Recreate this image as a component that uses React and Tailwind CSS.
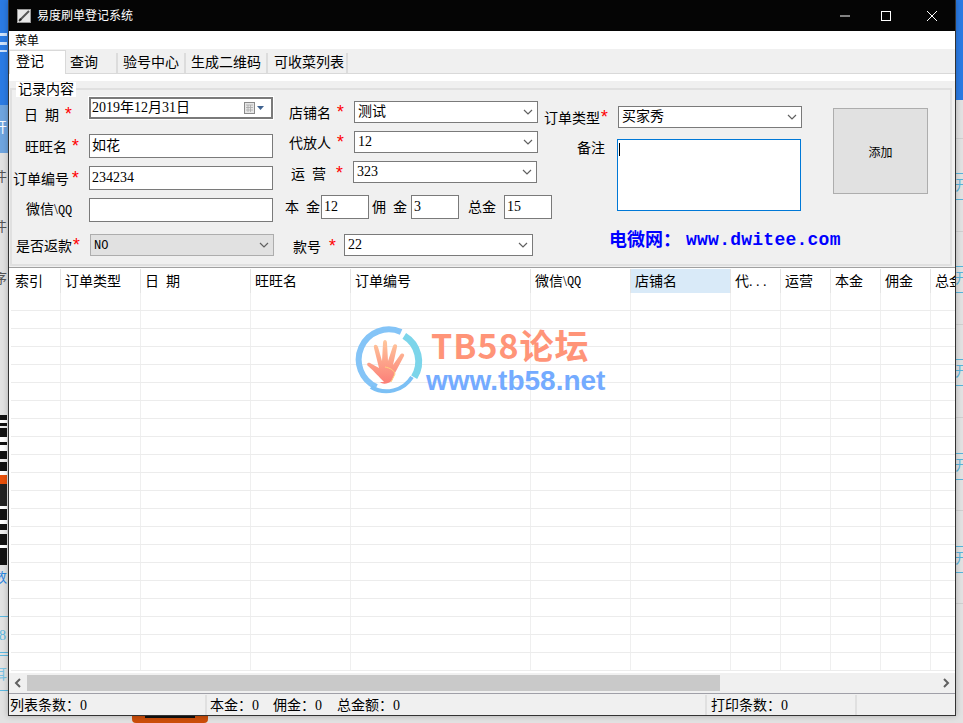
const FONT = '"Liberation Serif","Noto Sans CJK SC",serif';

function Star({ cls = "ml-[6px]" }) {
  return <span className={`${cls} inline-flex w-[7px] h-[7px] justify-center items-start text-[#ff0000] text-[18px] leading-[14px] font-['Liberation_Mono']`}>*</span>;
}

function Chevron() {
  return (
    <svg width="10" height="6" viewBox="0 0 10 6" className="shrink-0">
      <path d="M1 1l4 4 4-4" fill="none" stroke="#606060" strokeWidth="1.2" />
    </svg>
  );
}

function Box({ w, h = "h-6", children, cls = "" }) {
  return (
    <div className={`${w} ${h} shrink-0 bg-white border-[#7a7a7a] [border-width:1.5px] flex items-center pl-[2px] overflow-hidden leading-none ${cls}`}>
      {children}
    </div>
  );
}

function Select({ w, children, disabled }) {
  return (
    <div className={`${w} h-[22px] shrink-0 flex items-center justify-between pl-[3px] pr-[4px] border-[1.5px] leading-none ${disabled ? "bg-[#e1e1e1] border-[#adadad]" : "bg-white border-[#7a7a7a]"}`}>
      <span className={disabled ? "text-[12px]" : ""}>{children}</span>
      <Chevron />
    </div>
  );
}

const headers = [
  ["索引", "w-[50px]"], ["订单类型", "w-[80px]"], ["日\u2002期", "w-[110px]"], ["旺旺名", "w-[100px]"],
  ["订单编号", "w-[180px]"], ["微信\\QQ", "w-[100px]"], ["店铺名", "w-[100px]"], ["代...", "w-[50px]"],
  ["运营", "w-[50px]"], ["本金", "w-[50px]"], ["佣金", "w-[50px]"], ["总金", "w-[50px]"],
];

function Hand() {
  return (
    <svg width="72" height="72" viewBox="0 0 72 72" className="shrink-0">
      <defs>
        <linearGradient id="hg" x1="0" y1="0" x2="0" y2="1">
          <stop offset="0" stopColor="#ffc79c" />
          <stop offset="1" stopColor="#fb7f78" />
        </linearGradient>
      </defs>
      <path d="M20 60A30 30 0 0 1 52 9" transform="rotate(-8 36 36)" fill="none" stroke="#84c4f7" strokeWidth="6" />
      <path d="M53 12A30 30 0 0 1 60 54" transform="rotate(-4 36 36)" fill="none" stroke="#7cd5ea" strokeWidth="7" />
      <path d="M18 62A30 30 0 0 0 59 52" fill="none" stroke="#7cc0f5" strokeWidth="4" />
      <path d="M31 57C26 52 22 47 15 41c-2-2 0-4 2-3l9 5-5-20c-1-4 3-4 4-1l4 14 1-18c0-4 4-4 4 0l1 18 5-15c1-3 5-2 4 1l-4 18 7-10c2-3 5-1 4 1l-9 17c-2 6-3 9-7 10-3 1-6 1-8-1z" fill="url(#hg)" />
      <path d="M32 42c5 1 9 3 10 7l-4 8" fill="none" stroke="#ffd27e" strokeWidth="1" />
    </svg>
  );
}

export default function App() {
  return (
    <div className="relative w-[963px] h-[723px] overflow-hidden bg-[#e2e2e2] text-[14px] text-black" style={{ fontFamily: FONT }}>
      {/* desktop behind the window */}
      <div className="absolute left-0 top-0 w-[8px] h-[105px] bg-[#2b7be4]" />
      <div className="absolute left-0 top-[33px] w-[7px] h-[3px] bg-[#cfe2fa]" />
      <div className="absolute left-0 top-[42px] w-[7px] h-[3px] bg-[#cfe2fa]" />
      <div className="absolute left-0 top-[50px] w-[7px] h-[2px] bg-[#cfe2fa]" />
      <div className="absolute left-0 top-[105px] w-[8px] h-[48px] bg-[#6fa5df] text-white overflow-hidden leading-none pt-4 text-[14px]"><span className="-ml-[7px] block">开</span></div>
      <div className="absolute left-0 top-[170px] w-[8px] text-[#555] overflow-hidden leading-none"><span className="-ml-[7px] block">件</span></div>
      <div className="absolute left-0 top-[220px] w-[8px] text-[#555] overflow-hidden leading-none"><span className="-ml-[7px] block">件</span></div>
      <div className="absolute left-0 top-[272px] w-[8px] text-[#555] overflow-hidden leading-none"><span className="-ml-[7px] block">序</span></div>
      <div className="absolute left-0 top-[415px] w-[7px] h-[60px] bg-[linear-gradient(180deg,#111_0_5px,#fff_5px_8px,#111_8px_11px,#eee_11px_13px,#111_13px_22px,#fff_22px_27px,#111_27px_30px,#fff_30px_36px,#111_36px_44px,#eee_44px_47px,#111_47px_56px,#fff_56px_60px)]" />
      <div className="absolute left-0 top-[475px] w-[7px] h-[9px] bg-[#e8500a]" />
      <div className="absolute left-0 top-[484px] w-[7px] h-[81px] bg-[linear-gradient(180deg,#222_0_22px,#fff_22px_25px,#111_25px_36px,#fff_36px_40px,#111_40px_46px,#eee_46px_50px,#111_50px_61px,#fff_61px_64px,#111_64px_81px)]" />
      <div className="absolute left-0 top-[571px] w-[8px] text-[#2b86e0] overflow-hidden leading-none"><span className="-ml-[7px] block">数</span></div>
      <div className="absolute left-0 top-[616px] w-[8px] h-[37px] border-y border-[#5cb8e0] text-[#5cb8e0] overflow-hidden leading-none pt-3"><span className="-ml-[1px] block">8</span></div>
      <div className="absolute left-0 top-[655px] w-[8px] h-[36px] border-y border-[#5cb8e0] text-[#7cc4e4] overflow-hidden leading-none pt-3"><span className="-ml-[7px] block">耳</span></div>
      <div className="absolute left-[132px] top-[715px] w-[76px] h-[8px] bg-[#cc4e0a] rounded-b-sm" />
      <div className="absolute left-[145px] top-[716px] w-[50px] h-[2px] bg-[#111]" />
      <div className="absolute left-[956px] top-0 w-[7px] h-[100px] bg-[#2b7be4]" />
      {[138, 231, 324, 417, 510, 603].map((y) => (
        <div key={y} className="absolute left-[956px] w-[7px] h-px bg-[#cfcfcf]" style={{ top: y }} />
      ))}
      {[173, 266, 359, 453, 546].map((y) => (
        <div key={y} className="absolute left-[956px] w-[7px] h-[27px] border-y border-[#58b4dc] text-[#58b4dc] overflow-hidden leading-none pt-[5px]" style={{ top: y }}>
          <span className="block -ml-[1px]">开</span>
        </div>
      ))}

      {/* the window */}
      <div className="absolute left-[8px] top-0 w-[948px] h-[716px] flex flex-col border-x border-b border-[#333] bg-[#f0f0f0] shadow-[0_0_6px_rgba(0,0,0,0.25)]">
        {/* title bar */}
        <div className="h-[31px] shrink-0 bg-[#050505] flex items-center text-white">
          <svg width="14" height="14" viewBox="0 0 14 14" className="ml-[8px]">
            <rect x="0.500" y="0.500" width="13" height="13" fill="#e8e8e8" stroke="#999" />
            <path d="M2 12L12 2" stroke="#555" strokeWidth="2" />
            <path d="M2 12l3-1-2-2z" fill="#222" />
          </svg>
          <span className="ml-[6px] text-[12px]">易度刷单登记系统</span>
          <div className="ml-auto flex items-center">
            <svg width="12" height="12" viewBox="0 0 12 12" className="mr-[29px]"><path d="M1 6h10" stroke="#fff" /></svg>
            <svg width="12" height="12" viewBox="0 0 12 12" className="mr-[34px]"><rect x="1.500" y="1.500" width="9" height="9" fill="none" stroke="#fff" /></svg>
            <svg width="12" height="12" viewBox="0 0 12 12" className="mr-[17px]"><path d="M1 1l10 10M11 1L1 11" stroke="#fff" /></svg>
          </div>
        </div>
        {/* menu */}
        <div className="h-[18px] shrink-0 bg-white flex items-center pl-[6px] pt-[2px] text-[12px] leading-none">菜单</div>
        {/* tabs */}
        <div className="h-[25px] shrink-0 flex items-end border-b border-[#d9d9d9] bg-[#f0f0f0]">
          <div className="w-[57px] h-[24px] -mb-px bg-white border border-b-0 border-[#d9d9d9] pl-[6px] pb-[2px] flex items-center leading-none z-10">登记</div>
          <div className="w-[52px] h-[20px] bg-[#f0f0f0] border-r-2 border-[#dcdcdc] pl-[4px] pb-[1px] flex items-center leading-none">查询</div>
          <div className="w-[68px] h-[20px] bg-[#f0f0f0] border-r-2 border-[#dcdcdc] pl-[5px] pb-[1px] flex items-center leading-none">验号中心</div>
          <div className="w-[82px] h-[20px] bg-[#f0f0f0] border-r-2 border-[#dcdcdc] pl-[5px] pb-[1px] flex items-center leading-none">生成二维码</div>
          <div className="w-[80px] h-[20px] bg-[#f0f0f0] border-r-2 border-[#dcdcdc] pl-[6px] pb-[1px] flex items-center leading-none">可收菜列表</div>
        </div>
        <div className="h-[7px] shrink-0 bg-white" />

        {/* form */}
        <div className="h-[186px] shrink-0 bg-[#f0f0f0] pt-[7px] pl-[1px] pr-[3px] pb-[1px]">
          <div className="relative h-full border-2 border-[#e0e0e0] flex leading-none">
            <div className="absolute left-[4px] -top-[8px] h-[15px] w-[60px] bg-white flex items-center justify-center text-[14px]">记录内容</div>

            {/* column 1 */}
            <div className="w-[264px] shrink-0 pl-[1px] pt-[7px] flex flex-col">
              <div className="flex items-center h-[22px]">
                <div className="w-[77px] pl-[11px] pt-[14px] whitespace-pre">日{"\u2002"}期<Star /></div>
                <div className="w-[184px] h-[22px] ring-1 ring-white bg-white border-2 border-[#7a7a7a] flex items-center pl-[1px] -ml-[1px] leading-none">
                  <span>2019年12月31日</span>
                  <svg width="22" height="14" viewBox="0 0 22 14" className="ml-auto mr-[5px]">
                    <rect x="0.500" y="1.500" width="10" height="11" fill="#e6e6e6" stroke="#8a8a8a" />
                    <path d="M2 4h7M2 6.500h7M2 9h7M4 4v7M6.500 4v7" stroke="#a8a8a8" strokeWidth="0.8" />
                    <path d="M13 5h7l-3.500 4z" fill="#3f6290" />
                  </svg>
                </div>
              </div>
              <div className="flex items-center h-6 mt-[15px]">
                <div className="w-[76px] pl-[12px] pt-[2px] whitespace-pre">旺旺名<Star cls="ml-[5px]" /></div>
                <Box w="w-[184px]">如花</Box>
              </div>
              <div className="flex items-center h-6 mt-[8px]">
                <div className="w-[76px] pt-[2px] whitespace-pre">订单编号<Star cls="ml-[3px]" /></div>
                <Box w="w-[184px]">234234</Box>
              </div>
              <div className="flex items-center h-6 mt-[8px]">
                <div className="w-[76px] pl-[13px] whitespace-pre">微信\<span className="text-[12px] font-['Liberation_Mono']">QQ</span></div>
                <Box w="w-[184px]" />
              </div>
              <div className="flex items-center h-[22px] mt-[12px]">
                <div className="w-[77px] pl-[3px] pt-[2px] whitespace-pre">是否返款<Star cls="ml-[1px]" /></div>
                <Select w="w-[184px]" disabled><span className="font-['Liberation_Mono']">NO</span></Select>
              </div>
            </div>

            {/* column 2 */}
            <div className="w-[268px] ml-[8px] shrink-0 pt-[11px] flex flex-col">
              <div className="flex items-center h-[22px]">
                <div className="w-[70px] pl-[5px] pt-[2px] whitespace-pre">店铺名<Star /></div>
                <Select w="w-[184px]">测试</Select>
              </div>
              <div className="flex items-center h-[22px] mt-[8px]">
                <div className="w-[70px] pl-[5px] pt-[2px] whitespace-pre">代放人<Star /></div>
                <Select w="w-[184px]">12</Select>
              </div>
              <div className="flex items-center h-[22px] mt-[8px]">
                <div className="w-[69px] pl-[7px] pt-[4px] whitespace-pre">运{"\u2002"}营<Star cls="ml-[10px]" /></div>
                <Select w="w-[184px]">323</Select>
              </div>
              <div className="flex items-center h-6 mt-[12px] whitespace-pre">
                <div className="w-[37px] pl-[1px] pt-[2px]">本{"\u2002"}金</div>
                <Box w="w-[48px]">12</Box>
                <div className="w-[42px] pl-[3px] pt-[2px]">佣{"\u2002"}金</div>
                <Box w="w-[48px]">3</Box>
                <div className="w-[45px] pl-[9px] pt-[2px]">总金</div>
                <Box w="w-[48px]">15</Box>
              </div>
              <div className="flex items-center h-[22px] mt-[15px]">
                <div className="w-[60px] pl-[9px] pt-[4px] whitespace-pre">款号<Star cls="ml-[8px]" /></div>
                <Select w="w-[189px]">22</Select>
              </div>
            </div>

            {/* column 3 */}
            <div className="w-[258px] ml-[-8px] shrink-0 pt-[16px] flex flex-col">
              <div className="flex items-center h-[22px]">
                <div className="w-[74px] pt-[2px] whitespace-pre">订单类型<Star cls="ml-[1px]" /></div>
                <Select w="w-[184px]">买家秀</Select>
              </div>
              <div className="flex mt-[11px]">
                <div className="w-[73px] pl-[33px] pt-[3px]">备注</div>
                <div className="relative w-[184px] h-[72px] bg-white border border-[#0078d7]">
                  <div className="absolute left-[1px] top-[3px] w-px h-[13px] bg-black" />
                </div>
              </div>
              <div className="mt-[20px] ml-[65px] h-[17px] flex items-center text-[#0000ff] font-bold text-[18px] whitespace-nowrap">
                电微网：<span className="font-['Liberation_Mono'] tracking-[0.25px] ml-[5px]">www.dwitee.com</span>
              </div>
            </div>

            {/* column 4 */}
            <div className="ml-[31px] pt-[18px]">
              <div className="w-[95px] h-[86px] bg-[#e1e1e1] border-[1.5px] border-[#adadad] flex items-center justify-center pt-[4px] text-[12px]">添加</div>
            </div>
          </div>
        </div>

        {/* grid */}
        <div className="relative flex-1 min-h-0 bg-white border-t border-[#a0a0a0] overflow-hidden pl-[2px]">
          <div className="flex h-[25px] pt-px">
            {headers.map(([t, w]) => (
              <div key={t} className={`${w} shrink-0 flex items-center pl-[4px] whitespace-pre border-r border-[#e4e4e4] leading-none pt-[2px] ${t === "店铺名" ? "bg-[#d9eaf8] border-[#d9eaf8]" : ""}`}>
                {t === "微信\\QQ" ? <>微信\<span className="text-[12px] font-['Liberation_Mono']">QQ</span></> : t === "代..." ? <>代<span className="tracking-[3.500px]">...</span></> : t}
              </div>
            ))}
          </div>
          {Array.from({ length: 21 }).map((_, r) => (
            <div key={r} className="flex h-[18px] border-b border-[#ececec]">
              {headers.map(([t, w]) => (
                <div key={t} className={`${w} shrink-0 border-r border-[#efefef]`} />
              ))}
            </div>
          ))}
          {/* watermark */}
          <div className="absolute left-[344px] top-[57px] flex">
            <Hand />
            <div className="flex flex-col font-['Noto_Sans_CJK_SC'] font-bold leading-none">
              <span className="ml-[6px] mt-[1px] text-[#ff9478] text-[34px] tracking-[1px] leading-[38px]">TB58论坛</span>
              <span className="ml-[1px] mt-[3px] text-[#74abff] text-[28px] leading-[28px] font-['Liberation_Sans']">www.tb58.net</span>
            </div>
          </div>
        </div>

        {/* scrollbar */}
        <div className="h-[16px] shrink-0 mt-[2px] flex bg-[#f0f0f0] items-center">
          <div className="w-[18px] flex justify-center">
            <svg width="8" height="10" viewBox="0 0 8 10"><path d="M6 1L2 5l4 4" fill="none" stroke="#606060" strokeWidth="2" /></svg>
          </div>
          <div className="w-[693px] h-full bg-[#c9c9c9]" />
          <div className="ml-auto w-[18px] flex justify-center">
            <svg width="8" height="10" viewBox="0 0 8 10"><path d="M2 1l4 4-4 4" fill="none" stroke="#606060" strokeWidth="2" /></svg>
          </div>
        </div>

        {/* status bar */}
        <div className="h-[22px] shrink-0 mt-[2px] border-t border-[#a0a0a8] bg-[#f0f0f0] flex items-center leading-none whitespace-pre pt-px">
          <div className="w-[198px] h-[20px] flex items-center pl-px pt-[2px] border-r-2 border-[#e0e0e0]">列表条数：0</div>
          <div className="w-[500px] h-[20px] flex items-center pl-[3px] pt-[2px] border-r-2 border-[#e0e0e0]">
            <span>本金：0</span><span className="ml-[14px]">佣金：0</span><span className="ml-[15px]">总金额：0</span>
          </div>
          <div className="w-[150px] h-[20px] flex items-center pl-[4px] pt-[2px] border-r-2 border-[#e0e0e0]">打印条数：0</div>
        </div>
      </div>
    </div>
  );
}
